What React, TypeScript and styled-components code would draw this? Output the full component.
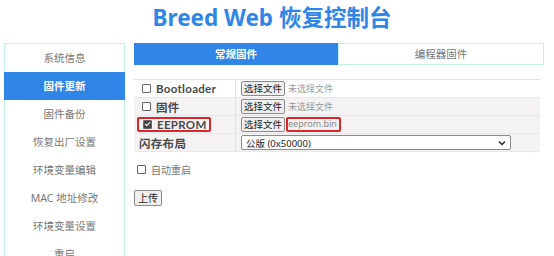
import styled, { createGlobalStyle } from "styled-components";

const GlobalStyle = createGlobalStyle`
  body {
    margin: 0;
    background: #fff;
    font-family: "Noto Sans", "Noto Sans CJK SC", sans-serif;
    color: #555;
  }
`;

const Page = styled.div`
  width: 554px;
`;

const Title = styled.h1`
  margin: 0;
  height: 43px;
  line-height: 36px;
  text-align: center;
  font-size: 22.5px;
  font-weight: 700;
  color: #2f86e6;
  padding-right: 10px;
`;

const Body = styled.div`
  display: flex;
  align-items: flex-start;
  padding-left: 4px;
  gap: 9px;
`;

const Sidebar = styled.nav`
  width: 119px;
  height: 240px;
  border: 1px solid #c6f0e6;
  border-bottom: none;
  display: flex;
  flex-direction: column;
`;

const NavItem = styled.div<{ $active?: boolean }>`
  height: 28px;
  line-height: 28px;
  text-align: center;
  font-size: 10.5px;
  margin: 0 -1px;
  background: ${(p) => (p.$active ? "#2f86e6" : "transparent")};
  color: ${(p) => (p.$active ? "#fff" : "#777")};
  font-weight: ${(p) => (p.$active ? 700 : 400)};
`;

const Main = styled.div`
  width: 410px;
  display: flex;
  flex-direction: column;
`;

const Tabs = styled.div`
  display: flex;
  height: 22px;
`;

const Tab = styled.div<{ $active?: boolean }>`
  width: 204px;
  line-height: ${(p) => (p.$active ? "22px" : "20px")};
  text-align: center;
  font-size: 10.5px;
  background: ${(p) => (p.$active ? "#2f86e6" : "#fff")};
  color: ${(p) => (p.$active ? "#fff" : "#777")};
  font-weight: ${(p) => (p.$active ? 700 : 400)};
  border: ${(p) => (p.$active ? "none" : "1px solid #c6f0e6")};
`;

const Table = styled.div`
  margin-top: 14px;
  width: 406px;
  border-top: 1px solid #c6f0e6;
`;

const Row = styled.div<{ $shade?: boolean }>`
  display: grid;
  grid-template-columns: 102px 1fr;
  height: 17px;
  border-bottom: 1px solid #d2f2ea;
  background: ${(p) => (p.$shade ? "#f4f2f2" : "#fff")};
`;

const LabelCell = styled.div`
  display: flex;
  align-items: center;
  padding-left: 5px;
  border-right: 1px solid #c6f0e6;
  font-family: Lato, "Noto Sans CJK SC", sans-serif;
  font-size: 11.5px;
  font-weight: 700;
  color: #4a4a4a;
  letter-spacing: 0.3px;
`;

const ValueCell = styled.div`
  display: flex;
  align-items: center;
  padding-left: 5px;
  gap: 3px;
`;

const Box = styled.span<{ $checked?: boolean }>`
  position: relative;
  display: inline-block;
  flex-shrink: 0;
  width: 7px;
  height: 7px;
  border: 1px solid #666;
  border-radius: 1px;
  margin: 0 5px 0 3px;
  background: ${(p) => (p.$checked ? "#444" : "#fff")};
  &::after {
    content: "";
    display: ${(p) => (p.$checked ? "block" : "none")};
    position: absolute;
    left: 2px;
    top: 0px;
    width: 2px;
    height: 4px;
    border: solid #fff;
    border-width: 0 1px 1px 0;
    transform: rotate(45deg);
  }
`;

const Highlight = styled.span`
  display: inline-flex;
  align-items: center;
  border: 2px solid #d8262b;
  border-radius: 2px;
  margin-left: -2px;
  padding: 0 2px 0 1px;
  height: 11px;
`;

const FileButton = styled.button`
  height: 15px;
  padding: 0 2px;
  font-family: inherit;
  font-size: 9.5px;
  line-height: 13px;
  color: #222;
  background: #efefef;
  border: 1px solid #8a8a8a;
  border-radius: 2px;
`;

const FileName = styled.span<{ $marked?: boolean }>`
  font-size: 9px;
  color: #999;
  ${(p) =>
    p.$marked &&
    `border: 2px solid #d8262b; border-radius: 2px; padding: 0 2px 0 0; line-height: 10px; height: 11px; color: #888; margin-left: -2px;`}
`;

const Select = styled.div`
  width: 260px;
  height: 13px;
  padding: 0 4px;
  display: flex;
  align-items: center;
  justify-content: space-between;
  border: 1px solid #8a8a8a;
  border-radius: 2px;
  background: #fff;
  font-size: 9.5px;
  color: #222;
`;

const Option = styled.div`
  display: flex;
  align-items: center;
  margin-top: 10px;
  height: 14px;
  font-size: 10px;
  color: #777;
`;

const Upload = styled.button`
  margin-top: 14px;
  align-self: flex-start;
  height: 16px;
  padding: 0 3px;
  font-family: inherit;
  font-size: 10px;
  line-height: 14px;
  color: #222;
  background: #efefef;
  border: 1px solid #8a8a8a;
  border-radius: 2px;
`;

const navItems = ["系统信息", "固件更新", "固件备份", "恢复出厂设置", "环境变量编辑", "MAC 地址修改", "环境变量设置", "重启"];

const files = [
  { label: "Bootloader", checked: false, file: "未选择文件" },
  { label: "固件", checked: false, file: "未选择文件" },
  { label: "EEPROM", checked: true, file: "eeprom.bin" },
];

export default function App() {
  return (
    <Page>
      <GlobalStyle />
      <Title>Breed Web 恢复控制台</Title>
      <Body>
        <Sidebar>
          {navItems.map((n) => (
            <NavItem key={n} $active={n === "固件更新"}>
              {n}
            </NavItem>
          ))}
        </Sidebar>
        <Main>
          <Tabs>
            <Tab $active>常规固件</Tab>
            <Tab>编程器固件</Tab>
          </Tabs>
          <Table>
            {files.map((f, i) => (
              <Row key={f.label} $shade={i > 0}>
                <LabelCell>
                  {f.checked ? (
                    <Highlight>
                      <Box $checked />
                      {f.label}
                    </Highlight>
                  ) : (
                    <>
                      <Box />
                      {f.label}
                    </>
                  )}
                </LabelCell>
                <ValueCell>
                  <FileButton>选择文件</FileButton>
                  <FileName $marked={f.checked}>{f.file}</FileName>
                </ValueCell>
              </Row>
            ))}
            <Row $shade>
              <LabelCell>闪存布局</LabelCell>
              <ValueCell>
                <Select>
                  公版 (0x50000)
                  <svg width="8" height="6" viewBox="0 0 8 6">
                    <path d="M1 1.5 L4 4.5 L7 1.5" fill="none" stroke="#222" strokeWidth="1.4" />
                  </svg>
                </Select>
              </ValueCell>
            </Row>
          </Table>
          <Option>
            <Box />
            自动重启
          </Option>
          <Upload>上传</Upload>
        </Main>
      </Body>
    </Page>
  );
}
